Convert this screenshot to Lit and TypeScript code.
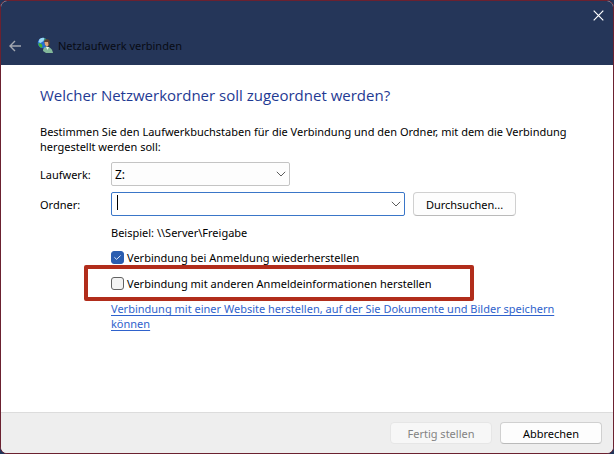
import { LitElement, html, css } from "lit";
import { customElement, state } from "lit/decorators.js";

const chevron = html`<svg class="chevron" width="10" height="6" viewBox="0 0 10 6" aria-hidden="true">
  <path d="M0.8 0.8 L5 5 L9.2 0.8" fill="none" stroke="#5c5c5c" stroke-width="1" />
</svg>`;

@customElement("app-root")
export class AppRoot extends LitElement {
  @state() private reconnect = true;
  @state() private otherCredentials = false;

  static styles = css`
    :host {
      display: block;
      min-height: 100vh;
      background: #22355a;
      font: 11px/15px "Noto Sans", "Open Sans", sans-serif;
      color: #000;
    }
    * {
      box-sizing: border-box;
    }
    .dialog {
      display: flex;
      flex-direction: column;
      min-height: 100vh;
      border: 1px solid #6b2130;
      border-radius: 7px;
      overflow: hidden;
      background: #fff;
    }
    header {
      background: #253659;
      height: 64px;
      display: flex;
      flex-direction: column;
      justify-content: space-between;
    }
    .controls {
      display: flex;
      justify-content: flex-end;
      padding: 9px 9px 0 0;
    }
    .caption {
      display: flex;
      align-items: center;
      padding: 0 8px 11px;
    }
    .title {
      margin: 0 0 0 4px;
      font-size: 11px;
      font-weight: 400;
      color: #080b14;
    }
    .plain {
      display: flex;
      padding: 0;
      border: 0;
      background: none;
    }
    .logo {
      margin-left: 16px;
    }
    main {
      flex: 1;
      padding: 19px 32px 16px 39px;
    }
    h1 {
      margin: 0 0 18px;
      font: 400 15px/22px "Open Sans", "Noto Sans", sans-serif;
      color: #1f3a93;
    }
    p {
      margin: 0;
    }
    .form {
      display: grid;
      grid-template-columns: 71px 1fr;
      row-gap: 6px;
      align-items: center;
      margin-top: 8px;
    }
    .row {
      display: flex;
      align-items: center;
      gap: 8px;
    }
    .combo {
      position: relative;
      display: flex;
      width: 294px;
    }
    .combo.drive {
      width: 179px;
    }
    select,
    input[type="text"] {
      appearance: none;
      width: 100%;
      height: 24px;
      margin: 0;
      padding: 0 24px 0 3px;
      border: 1px solid #c4c4c4;
      border-radius: 2px;
      background: #fdfdfd;
      font: inherit;
      font-size: 12px;
      color: inherit;
      outline: none;
    }
    input[type="text"] {
      border-color: #3a76c8;
      background: #fff;
    }
    .chevron {
      position: absolute;
      right: 4px;
      top: 9px;
      pointer-events: none;
    }
    .caret {
      position: absolute;
      left: 6px;
      top: 3px;
      width: 1px;
      height: 15px;
      background: #000;
    }
    .button {
      height: 24px;
      padding: 0 8px;
      border: 1px solid #d0d0d0;
      border-bottom-color: #bababa;
      border-radius: 4px;
      background: #fdfdfd;
      font: inherit;
      color: #000;
    }
    .browse {
      width: 103px;
    }
    .indent {
      margin-left: 71px;
    }
    .example {
      margin-top: 9px;
    }
    .check {
      display: flex;
      align-items: center;
      gap: 3px;
    }
    .first {
      margin-top: 10px;
    }
    .highlight {
      width: 390px;
      margin: 0 0 0 44px;
      padding: 7px 23px 6px;
      border: 4px solid #b12d1b;
      border-radius: 2px;
    }
    input[type="checkbox"] {
      appearance: none;
      flex: none;
      width: 13px;
      height: 13px;
      margin: 0;
      border: 1px solid #626262;
      border-radius: 3px;
      background: #f3f3f3;
    }
    input[type="checkbox"]:checked {
      border-color: #2a5db0;
      background: #2a5db0;
    }
    .box {
      position: relative;
      display: flex;
    }
    .tick {
      position: absolute;
      left: 3px;
      top: 4px;
      pointer-events: none;
    }
    a {
      color: #2f62cc;
      text-underline-offset: 2px;
      text-decoration-skip-ink: none;
    }
    footer {
      display: flex;
      justify-content: flex-end;
      gap: 8px;
      padding: 9px 11px 9px;
      border-top: 1px solid #dcdcdc;
      background: #eee;
    }
    footer .button {
      width: 102px;
      height: 22px;
    }
    .button:disabled {
      border-color: #e6e6e6;
      background: #f7f7f7;
      color: #838383;
    }
  `;

  render() {
    return html`
      <div class="dialog">
        <header>
          <div class="controls">
            <button class="plain" aria-label="Schließen">
              <svg width="11" height="11" viewBox="0 0 11 11">
                <path d="M0.7 0.7 L10.3 10.3 M10.3 0.7 L0.7 10.3" stroke="#fff" stroke-width="1.2" />
              </svg>
            </button>
          </div>
          <div class="caption">
            <button class="plain" aria-label="Zurück">
              <svg width="12" height="12" viewBox="0 0 12 12">
                <path d="M12 6 H1 M6 1 L1 6 L6 11" fill="none" stroke="#a3a7b0" stroke-width="1.4" />
              </svg>
            </button>
            <svg class="logo" width="17" height="17" viewBox="0 0 17 17" aria-hidden="true">
              <circle cx="6" cy="6" r="5.3" fill="#246fd0" />
              <path d="M2.5 2 Q5.5 0 7.5 1 L6.5 4 L3.5 6 L1.5 5Z" fill="#9bd7f5" />
              <path d="M1.5 6 L4.5 7 L5.5 9 L4.5 11 Q1 9 1.5 6Z M7.5 1 L10.5 4 L7.5 4Z" fill="#45b52d" />
              <path d="M7 4.5 Q7.5 2 10 2 Q13.2 2.5 12.8 6 L12 9 L8.5 9Z" fill="#594033" />
              <path d="M7.5 5 L11 5 L11.5 8 L10 10 L8 8Z" fill="#dca67d" />
              <path d="M6 14 Q6 10 9 10 L12 10 Q15.5 12 16 16 L9 16Z" fill="#83b89a" />
              <path d="M9 10 L10.5 13 L12 10Z" fill="#e8f2ee" />
            </svg>
            <h2 class="title">Netzlaufwerk verbinden</h2>
          </div>
        </header>
        <main>
          <h1>Welcher Netzwerkordner soll zugeordnet werden?</h1>
          <p>
            Bestimmen Sie den Laufwerkbuchstaben für die Verbindung und den Ordner, mit dem die Verbindung
            hergestellt werden soll:
          </p>
          <div class="form">
            <label for="drive">Laufwerk:</label>
            <div class="row">
              <div class="combo drive">
                <select id="drive"><option>Z:</option></select>
                ${chevron}
              </div>
            </div>
            <label for="folder">Ordner:</label>
            <div class="row">
              <div class="combo">
                <input id="folder" type="text" />
                <span class="caret"></span>
                ${chevron}
              </div>
              <button class="button browse">Durchsuchen...</button>
            </div>
          </div>
          <p class="indent example">Beispiel: \\\\Server\\Freigabe</p>
          <label class="check indent first">
            <span class="box">
              <input
                type="checkbox"
                .checked=${this.reconnect}
                @change=${(e: Event) => (this.reconnect = (e.target as HTMLInputElement).checked)}
              />
              ${this.reconnect
                ? html`<svg class="tick" width="7" height="5" viewBox="0 0 7 5">
                    <path d="M0.4 2.3 L2.6 4.3 L6.6 0.5" fill="none" stroke="#dce8fb" />
                  </svg>`
                : ""}
            </span>
            Verbindung bei Anmeldung wiederherstellen
          </label>
          <div class="highlight">
            <label class="check">
              <input
                type="checkbox"
                .checked=${this.otherCredentials}
                @change=${(e: Event) => (this.otherCredentials = (e.target as HTMLInputElement).checked)}
              />
              Verbindung mit anderen Anmeldeinformationen herstellen
            </label>
          </div>
          <p class="indent">
            <a href="#">Verbindung mit einer Website herstellen, auf der Sie Dokumente und Bilder speichern können</a>
          </p>
        </main>
        <footer>
          <button class="button" disabled>Fertig stellen</button>
          <button class="button">Abbrechen</button>
        </footer>
      </div>
    `;
  }
}
